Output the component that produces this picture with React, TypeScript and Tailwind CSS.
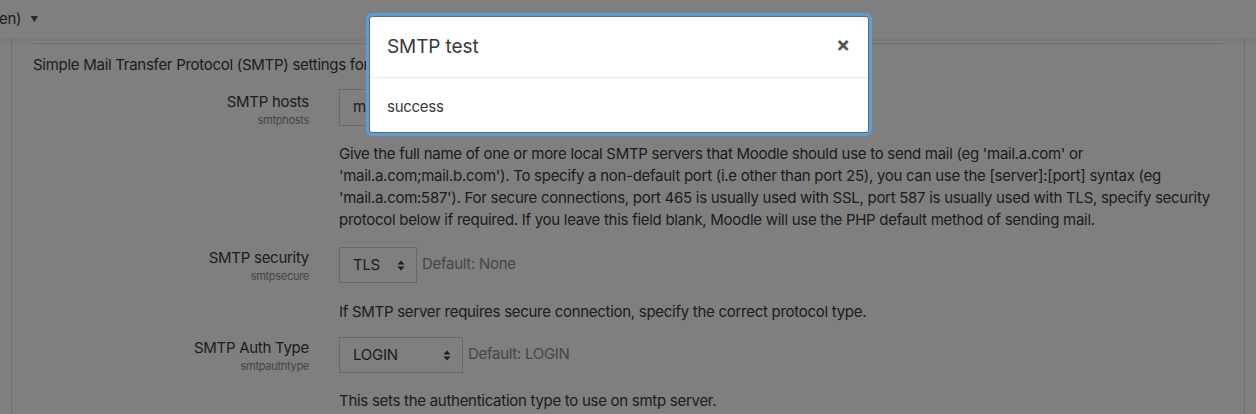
import React from "react";

function SelectArrows() {
  return (
    <svg width="8" height="11" viewBox="0 0 8 11" className="shrink-0">
      <path d="M4 0.5 L7.5 4.5 L0.5 4.5 Z" fill="#373a3c" />
      <path d="M4 10.5 L7.5 6.5 L0.5 6.5 Z" fill="#373a3c" />
    </svg>
  );
}

function Row({
  label,
  name,
  children,
  labelPad = "pt-0",
}: {
  label: string;
  name: string;
  children: React.ReactNode;
  labelPad?: string;
}) {
  return (
    <div className="flex gap-[30px]">
      <div className={`w-[276px] shrink-0 text-right ${labelPad}`}>
        <div className="text-[15px] leading-[22px] text-[#373a3c]">{label}</div>
        <div className="text-[11px] leading-[15px] text-[#868e96]">{name}</div>
      </div>
      <div className="flex-1">{children}</div>
    </div>
  );
}

export default function App() {
  return (
    <div
      className="relative h-[414px] w-[1256px] overflow-hidden bg-white tracking-[-0.28px] text-[#373a3c]"
      style={{ fontFamily: "Inter, 'Noto Sans', sans-serif" }}
    >
      {/* Top bar */}
      <div className="relative z-10 flex h-[38px] items-center bg-white shadow-[0_2px_4px_rgba(0,0,0,0.08)]">
        <span className="-ml-[1px] text-[15px]">en)</span>
        <span className="ml-[9px] text-[8px] text-[#555]">▼</span>
      </div>

      {/* Content card */}
      <div className="mx-[11px] h-[376px] border-x border-[#dee2e6] bg-white px-[21px] pt-[5px]">
        <div className="border-t border-[#e5e5e5]" />
        <p className="mt-[10px] text-[15px] leading-[22px]">
          Simple Mail Transfer Protocol (SMTP) settings for sending mail.
        </p>

        <div className="mt-[13px]">
          <Row label="SMTP hosts" name="smtphosts" labelPad="pt-[2px]">
            <div className="flex h-[37px] w-[300px] items-center border border-[#ced4da] px-[13px] text-[15px]">
              mail.example.com
            </div>
            <p className="mt-[17px] text-[15px] leading-[22px]">
              Give the full name of one or more local SMTP servers that Moodle should use to send mail (eg
              'mail.a.com' or 'mail.a.com;mail.b.com'). To specify a non-default port (i.e other than port 25), you
              can use the [server]:[port] syntax (eg 'mail.a.com:587'). For secure connections, port 465 is usually
              used with SSL, port 587 is usually used with TLS, specify security protocol below if required. If you
              leave this field blank, Moodle will use the PHP default method of sending mail.
            </p>
          </Row>
        </div>

        <div className="mt-[16px]">
          <Row label="SMTP security" name="smtpsecure">
            <div className="flex items-center gap-[5px]">
              <div className="flex h-[36px] w-[78px] items-center justify-between border border-[#ced4da] pl-[13px] pr-[11px] text-[15px]">
                TLS
                <SelectArrows />
              </div>
              <span className="-mt-[1px] text-[15px] text-[#868e96]">Default: None</span>
            </div>
            <p className="mt-[18px] text-[15px] leading-[22px]">
              If SMTP server requires secure connection, specify the correct protocol type.
            </p>
          </Row>
        </div>

        <div className="mt-[14px]">
          <Row label="SMTP Auth Type" name="smtpauthtype">
            <div className="flex items-center gap-[5px]">
              <div className="flex h-[36px] w-[124px] items-center justify-between border border-[#ced4da] pl-[13px] pr-[11px] text-[15px]">
                LOGIN
                <SelectArrows />
              </div>
              <span className="-mt-[1px] text-[15px] text-[#868e96]">Default: LOGIN</span>
            </div>
            <p className="mt-[17px] text-[15px] leading-[22px]">
              This sets the authentication type to use on smtp server.
            </p>
          </Row>
        </div>
      </div>

      {/* Backdrop */}
      <div className="absolute inset-0 z-20 bg-black/50" />

      {/* Modal */}
      <div className="absolute left-[369px] top-[16px] z-30 w-[500px] rounded-[3px] border border-[#666] bg-white outline outline-[3px] outline-[#5b9dd9]">
        <div className="flex h-[61px] items-center justify-between border-b border-[#e9ecef] pl-[17px] pr-[18px]">
          <h5 className="mt-[1px] text-[19px] font-normal tracking-[-0.1px] text-[#373a3c]">SMTP test</h5>
          <span className="-mt-[5px] text-[21px] font-bold leading-none text-[#555]">×</span>
        </div>
        <div className="px-[17px] pb-[14px] pt-[18px] text-[15px] leading-[22px]">success</div>
      </div>
    </div>
  );
}
